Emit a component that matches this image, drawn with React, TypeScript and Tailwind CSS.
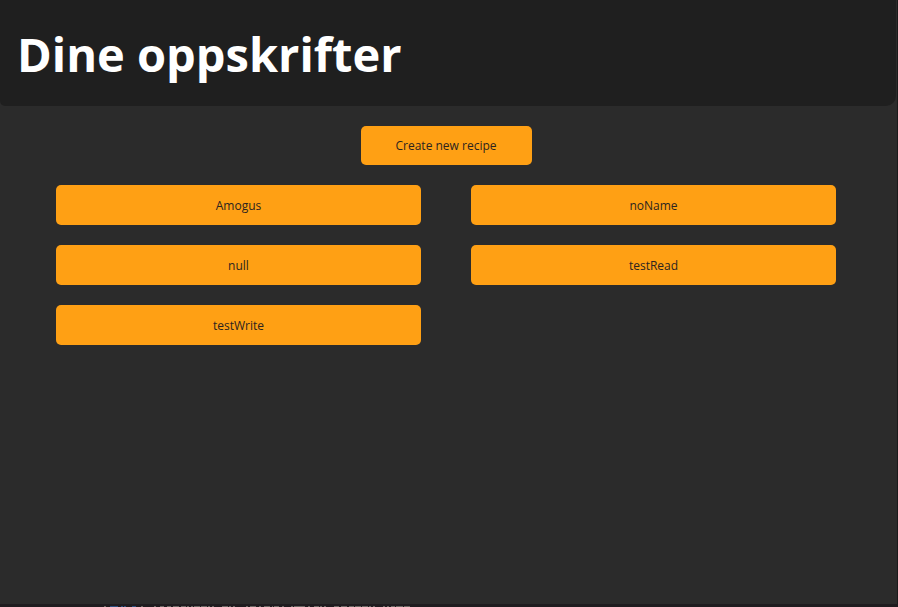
const recipes = ["Amogus", "noName", "null", "testRead", "testWrite"];

const button =
  "rounded-[5px] bg-[#ffa014] text-[12px] leading-4 text-[#2b2420] hover:bg-[#ffb03c]";

// Specks along the bottom edge, as [x, width] pairs.
const blueSpecks = [[8, 8], [19, 2], [22, 2], [30, 4]];
const greySpecks = [
  [2, 2], [39, 2], [52, 2], [58, 4], [65, 4], [71, 6], [79, 5], [85, 2], [89, 2], [92, 6],
  [99, 6], [106, 2], [110, 2], [120, 6], [127, 2], [131, 2], [144, 2], [148, 6], [157, 2],
  [162, 6], [170, 1], [172, 5], [180, 2], [189, 2], [192, 11], [206, 2], [212, 5], [218, 2],
  [222, 2], [232, 5], [239, 6], [247, 5], [253, 6], [260, 6], [267, 2], [271, 2], [281, 2],
  [285, 2], [289, 4], [294, 7], [302, 6],
];

export default function App() {
  return (
    <div className="flex min-h-screen flex-col bg-[#1f1c1f] font-['Open_Sans',sans-serif]">
      <div className="flex flex-1 flex-col border-r border-[#1b1b1b] bg-[#2b2b2b]">
        <header className="mr-px rounded-br-[10px] rounded-bl-[5px] bg-[#1f1f1f] px-[17px] pt-[22px] pb-5">
          <h1 className="text-[47px] leading-[64px] font-bold text-white">Dine oppskrifter</h1>
        </header>
        <main className="flex flex-1 flex-col items-center gap-5 pt-5 pr-[61px] pl-14">
          <button type="button" className={`${button} h-[39px] w-[171px]`}>
            Create new recipe
          </button>
          <ul className="grid w-full grid-cols-2 gap-x-[50px] gap-y-5">
            {recipes.map((name) => (
              <li key={name}>
                <button type="button" className={`${button} block h-10 w-full pt-0.5`}>
                  {name}
                </button>
              </li>
            ))}
          </ul>
        </main>
      </div>
      <footer className="pt-0.5 pl-[102px]">
        <svg className="block" width="310" height="1" aria-hidden="true">
          {blueSpecks.map(([x, width]) => (
            <rect key={x} x={x} width={width} height="1" fill="#2b4f80" />
          ))}
          {greySpecks.map(([x, width]) => (
            <rect key={x} x={x} width={width} height="1" fill="#6c6864" />
          ))}
        </svg>
      </footer>
    </div>
  );
}
